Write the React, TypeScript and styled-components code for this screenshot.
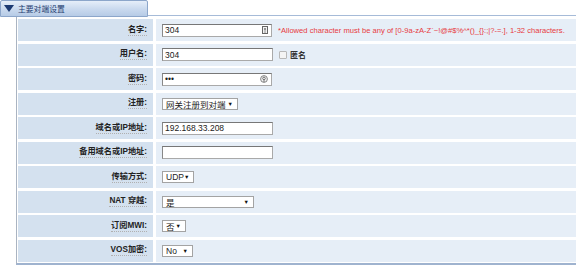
import React from "react";
import styled, { createGlobalStyle } from "styled-components";

const Global = createGlobalStyle`
  html, body { margin: 0; padding: 0; background: #fff; overflow: hidden; }
  body { font-family: "Liberation Sans", Arial, "Noto Sans CJK SC", sans-serif; }
  * { box-sizing: border-box; }
`;

const Page = styled.div`
  width: 576px;
  height: 267px;
  overflow: hidden;
`;

const Header = styled.div`
  display: flex;
  align-items: flex-end;
  height: 17px;
`;

const Tab = styled.div`
  width: 148px;
  height: 17px;
  border: 1px solid #8ca6ca;
  border-radius: 2px 2px 0 0;
  background: linear-gradient(#e6eef9, #c9d9ee 55%, #b6cbe6);
  display: flex;
  align-items: center;
  gap: 4px;
  padding-left: 3px;
  color: #1f3d70;
  font-size: 7.8px;
`;

const Rule = styled.div`
  flex: 1;
  height: 1px;
  margin-bottom: 1px;
  background: #a6bbd8;
`;

const Panel = styled.div`
  margin-left: 16px;
  width: 640px;
  border-left: 1px solid #aab4c2;
  border-bottom: 2px solid #9fb3cf;
  padding: 2px 0 1px 1px;
  display: grid;
  grid-template-columns: 135px 1fr;
  column-gap: 3px;
  row-gap: 2.55px;
`;

const Label = styled.div`
  height: 22px;
  background: #d4e1ef;
  display: flex;
  align-items: center;
  justify-content: flex-end;
  padding-right: 6px;
  font-size: 8.2px;
  font-weight: bold;
  color: #222;
  white-space: nowrap;
`;

const LabelText = styled.span`
  border-bottom: 1px dotted #b0b0b0;
  line-height: 10px;
`;

const Value = styled.div`
  height: 22px;
  background: #e6eef7;
  display: flex;
  align-items: center;
  padding-left: 6px;
  gap: 6px;
  font-size: 8.5px;
  color: #222;
  white-space: nowrap;
`;

const Input = styled.div<{ $w?: number }>`
  width: ${(p) => p.$w ?? 110}px;
  height: 13px;
  background: #fff;
  border: 1px solid #a9a9a9;
  border-top-color: #777;
  border-left-color: #888;
  display: flex;
  align-items: center;
  justify-content: space-between;
  padding: 0 3px 0 2px;
  font-size: 8.5px;
  color: #222;
`;

const Select = styled.div<{ $w: number }>`
  width: ${(p) => p.$w}px;
  height: 12px;
  background: #fff;
  border: 1px solid #a3a3a3;
  display: flex;
  align-items: center;
  justify-content: space-between;
  padding: 0 4px 0 3px;
  font-size: 8.5px;
  color: #222;
  white-space: nowrap;
`;

const Arrow = styled.span`
  font-size: 5.5px;
  color: #111;
  flex: none;
`;

const Check = styled.span`
  width: 8px;
  height: 8px;
  border: 1px solid #b8b8b8;
  background: #f4f4f4;
  border-radius: 1px;
`;

const Anon = styled.span`
  margin-left: -3px;
  font-size: 8px;
  font-weight: bold;
  color: #333;
`;

const ErrorText = styled.span`
  color: #e63a3f;
  font-size: 7.6px;
  white-space: nowrap;
`;

const KeyIcon = () => (
  <svg width="6" height="8" viewBox="0 0 6 8">
    <rect x="0.5" y="0.5" width="5" height="7" fill="#f2f2f2" stroke="#666" strokeWidth="1" />
    <line x1="3" y1="2" x2="3" y2="4.5" stroke="#333" strokeWidth="1" />
    <line x1="3" y1="5.5" x2="3" y2="6.5" stroke="#333" strokeWidth="1" />
  </svg>
);

const EyeIcon = () => (
  <svg width="8" height="8" viewBox="0 0 8 8">
    <circle cx="4" cy="4" r="3.4" fill="#f4f4f4" stroke="#777" strokeWidth="0.9" />
    <circle cx="4" cy="3.4" r="1.3" fill="none" stroke="#555" strokeWidth="0.8" />
    <line x1="4" y1="5" x2="4" y2="7" stroke="#555" strokeWidth="0.8" />
  </svg>
);

const Triangle = () => (
  <svg width="10" height="7" viewBox="0 0 10 7">
    <polygon points="0,0 10,0 5,7" fill="#1c3a72" />
  </svg>
);

const Row: React.FC<{ label: string; children?: React.ReactNode }> = ({ label, children }) => (
  <>
    <Label>
      <LabelText>{label}</LabelText>
    </Label>
    <Value>{children}</Value>
  </>
);

export default function App() {
  return (
    <Page>
      <Global />
      <Header>
        <Tab>
          <Triangle />
          <span>主要对端设置</span>
        </Tab>
        <Rule />
      </Header>
      <Panel>
        <Row label="名字:">
          <Input>
            <span>304</span>
            <KeyIcon />
          </Input>
          <ErrorText>*Allowed character must be any of [0-9a-zA-Z`~!@#$%^*()_{"{}"}:;|?-=.], 1-32 characters.</ErrorText>
        </Row>
        <Row label="用户名:">
          <Input $w={111}>
            <span>304</span>
          </Input>
          <Check />
          <Anon>匿名</Anon>
        </Row>
        <Row label="密码:">
          <Input>
            <span>•••</span>
            <EyeIcon />
          </Input>
        </Row>
        <Row label="注册:">
          <Select $w={76}>
            <span>网关注册到对端</span>
            <Arrow>▼</Arrow>
          </Select>
        </Row>
        <Row label="域名或IP地址:">
          <Input $w={111}>
            <span>192.168.33.208</span>
          </Input>
        </Row>
        <Row label="备用域名或IP地址:">
          <Input $w={111} />
        </Row>
        <Row label="传输方式:">
          <Select $w={32}>
            <span>UDP</span>
            <Arrow>▼</Arrow>
          </Select>
        </Row>
        <Row label="NAT 穿越:">
          <Select $w={92}>
            <span>是</span>
            <Arrow>▼</Arrow>
          </Select>
        </Row>
        <Row label="订阅MWI:">
          <Select $w={24}>
            <span>否</span>
            <Arrow>▼</Arrow>
          </Select>
        </Row>
        <Row label="VOS加密:">
          <Select $w={31}>
            <span>No</span>
            <Arrow>▼</Arrow>
          </Select>
        </Row>
      </Panel>
    </Page>
  );
}
